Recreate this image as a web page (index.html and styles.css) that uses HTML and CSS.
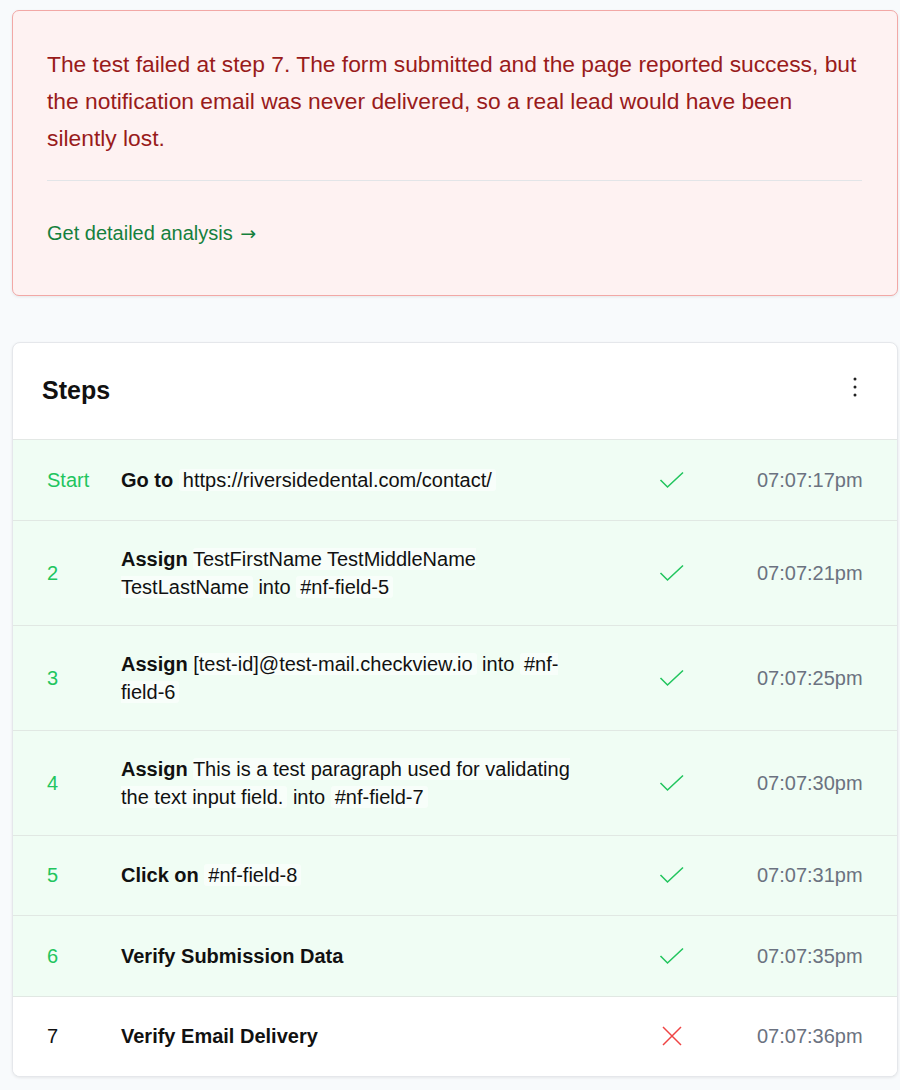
FILE: index.html
```html
<!DOCTYPE html>
<html lang="en">
<head>
    <meta charset="UTF-8">
    <meta name="viewport" content="width=device-width, initial-scale=1.0">
    <title>Test Run - Steps</title>
    <link rel="stylesheet" href="styles.css">
</head>
<body>
    <div class="run-container">
        <section class="failure-box">
            <p class="failure-text">The test failed at step 7. The form submitted and the page reported success, but the notification email was never delivered, so a real lead would have been silently lost.</p>
            <hr>
            <a class="analysis-link" href="#">Get detailed analysis <span class="arrow">&rarr;</span></a>
        </section>

        <section class="steps-card">
            <header class="steps-header">
                <h2>Steps</h2>
                <button class="menu-btn" aria-label="More">
                    <svg width="6" height="22" viewBox="0 0 6 22"><circle cx="3" cy="3" r="1.5"/><circle cx="3" cy="11" r="1.5"/><circle cx="3" cy="19" r="1.5"/></svg>
                </button>
            </header>

            <div class="step-row passed">
                <div class="step-num">Start</div>
                <div class="step-body"><b>Go to</b> <span class="val">https://riversidedental.com/contact/</span></div>
                <div class="step-status"><svg class="icon-check" width="26" height="18" viewBox="0 0 26 18"><path d="M1.5 9 L8.5 16 L24 1.5"/></svg></div>
                <div class="step-time">07:07:17pm</div>
            </div>
            <div class="step-row passed">
                <div class="step-num">2</div>
                <div class="step-body"><b>Assign</b> <span class="val lead">TestFirstName TestMiddleName TestLastName</span> into <span class="val">#nf-field-5</span></div>
                <div class="step-status"><svg class="icon-check" width="26" height="18" viewBox="0 0 26 18"><path d="M1.5 9 L8.5 16 L24 1.5"/></svg></div>
                <div class="step-time">07:07:21pm</div>
            </div>
            <div class="step-row passed">
                <div class="step-num">3</div>
                <div class="step-body"><b>Assign</b> <span class="val lead">[test-id]@test-mail.checkview.io</span> into <span class="val">#nf-field-6</span></div>
                <div class="step-status"><svg class="icon-check" width="26" height="18" viewBox="0 0 26 18"><path d="M1.5 9 L8.5 16 L24 1.5"/></svg></div>
                <div class="step-time">07:07:25pm</div>
            </div>
            <div class="step-row passed">
                <div class="step-num">4</div>
                <div class="step-body"><b>Assign</b> <span class="val lead">This is a test paragraph used for validating the text input field.</span> into <span class="val">#nf-field-7</span></div>
                <div class="step-status"><svg class="icon-check" width="26" height="18" viewBox="0 0 26 18"><path d="M1.5 9 L8.5 16 L24 1.5"/></svg></div>
                <div class="step-time">07:07:30pm</div>
            </div>
            <div class="step-row passed">
                <div class="step-num">5</div>
                <div class="step-body"><b>Click on</b> <span class="val">#nf-field-8</span></div>
                <div class="step-status"><svg class="icon-check" width="26" height="18" viewBox="0 0 26 18"><path d="M1.5 9 L8.5 16 L24 1.5"/></svg></div>
                <div class="step-time">07:07:31pm</div>
            </div>
            <div class="step-row passed">
                <div class="step-num">6</div>
                <div class="step-body"><b>Verify Submission Data</b></div>
                <div class="step-status"><svg class="icon-check" width="26" height="18" viewBox="0 0 26 18"><path d="M1.5 9 L8.5 16 L24 1.5"/></svg></div>
                <div class="step-time">07:07:35pm</div>
            </div>
            <div class="step-row failed">
                <div class="step-num">7</div>
                <div class="step-body"><b>Verify Email Delivery</b></div>
                <div class="step-status"><svg class="icon-cross" width="20" height="20" viewBox="0 0 20 20"><path d="M1 1 L19 19 M19 1 L1 19"/></svg></div>
                <div class="step-time">07:07:36pm</div>
            </div>
        </section>
    </div>
</body>
</html>
```

FILE: styles.css
```css
body {
    font-family: "Liberation Sans", Arial, Helvetica, sans-serif;
    margin: 0;
    background-color: #f8fafc;
    color: #111;
}
.run-container {
    padding: 10px 2px 12px 12px;
}

/* failure summary */
.failure-box {
    background: #fef2f2;
    border: 1px solid #f2a8a6;
    border-radius: 7px;
    box-shadow: 0 1px 3px rgba(0,0,0,0.08);
    padding: 35px 35px 43px 34px;
}
.failure-text {
    margin: 0;
    font-size: 22.8px;
    line-height: 37px;
    color: #991b1b;
}
.failure-box hr {
    border: none;
    border-top: 1px solid #e2e5e8;
    margin: 23px 0 34px 0;
}
.analysis-link {
    display: block;
    color: #15803d;
    font-size: 20px;
    line-height: 37px;
    text-decoration: none;
}
.analysis-link .arrow {
    font-family: "DejaVu Sans", sans-serif;
    font-size: 19px;
    margin-left: 2px;
}

/* steps table */
.steps-card {
    margin-top: 46px;
    background: #fff;
    border: 1px solid #e5e7eb;
    border-radius: 8px;
    box-shadow: 0 1px 3px rgba(0,0,0,0.08);
    overflow: hidden;
}
.steps-header {
    display: flex;
    justify-content: space-between;
    align-items: center;
    height: 96px;
    padding: 0 39px 0 29px;
    border-bottom: 1px solid #e3e8e5;
}
.steps-header h2 {
    margin: -2px 0 0 0;
    font-size: 25px;
    font-weight: bold;
}
.menu-btn {
    background: none;
    border: none;
    padding: 0;
    margin-top: -8px;
    cursor: pointer;
    fill: #222;
    display: flex;
}
.step-row {
    display: grid;
    grid-template-columns: 74px 459px 1fr 105px;
    align-items: center;
    padding: 24px 35px 24px 34px;
    font-size: 20px;
    line-height: 28px;
    border-bottom: 1px solid #e1e8e3;
}
.step-row:last-child {
    border-bottom: none;
}
.step-row.passed {
    background: #f0fdf4;
}
.step-row.failed {
    background: #fff;
}
.step-num {
    color: #22c55e;
}
.failed .step-num {
    color: #111;
}
.step-body b {
    font-weight: bold;
}
.step-body .val {
    background: rgba(255,255,255,0.55);
    border-radius: 3px;
    padding: 0 4px;
}
.step-body .val.lead {
    padding-left: 0;
}
.step-status {
    display: flex;
    justify-content: center;
    align-items: center;
    height: 31.5px;
    padding-left: 6px;
}
.icon-check path {
    fill: none;
    stroke: #22c55e;
    stroke-width: 1.6;
}
.icon-cross path {
    fill: none;
    stroke: #ef4444;
    stroke-width: 1.5;
}
.step-time {
    color: #6b7280;
    text-align: right;
}
```
